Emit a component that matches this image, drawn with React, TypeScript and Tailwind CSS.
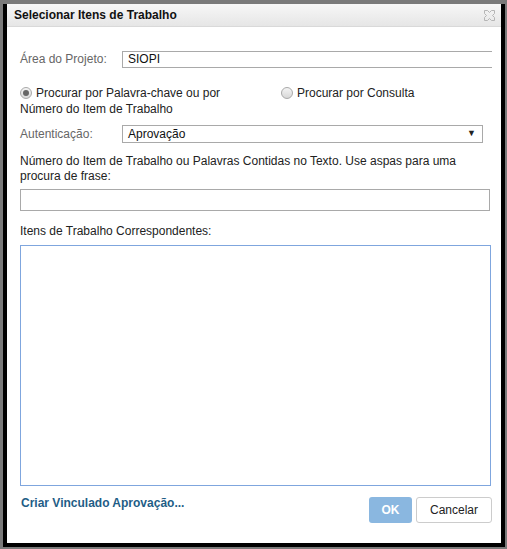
import React from 'react';

const font = { fontFamily: '"Liberation Sans", Arial, sans-serif' };

const Radio: React.FC<{ checked?: boolean }> = ({ checked }) => (
  <span className="inline-flex h-[12px] w-[12px] shrink-0 items-center justify-center rounded-full border border-[#a9a9a9] bg-gradient-to-b from-[#f4f4f4] to-[#d8d8d8]">
    {checked && <span className="h-[6px] w-[6px] rounded-full bg-[#666]" />}
  </span>
);

export default function App() {
  return (
    <div className="h-[549px] w-[507px] bg-[#7a7a7a] pt-[4px] pl-[3px] pr-[2px] pb-[2px] text-[12px] text-[#222]" style={font}>
      <div className="flex h-full flex-col border-x-[4px] border-b-[4px] border-black bg-white">
        <div className="flex h-[23px] items-center justify-between border-b border-[#d9d9d9] bg-gradient-to-b from-[#f7f7f7] to-[#e6e6e6] pl-[7px] pr-[5px]">
          <span className="text-[12px] font-bold text-[#111]">Selecionar Itens de Trabalho</span>
          <svg width="13" height="13" viewBox="0 0 13 13" fill="none" stroke="#b5b5b5" strokeWidth="1">
            <path d="M1.5 1.5h3l2 2 2-2h3v3l-2 2 2 2v3h-3l-2-2-2 2h-3v-3l2-2-2-2z" />
          </svg>
        </div>

        <div className="flex flex-1 flex-col pl-[13px] pr-[9px] pt-[23px]">
          <div className="flex items-center">
            <label className="w-[102px] text-[#666]">Área do Projeto:</label>
            <div className="h-[17px] flex-1 border-y border-l border-[#a9a9a9] pl-[5px] leading-[15px] text-[#111]">SIOPI</div>
          </div>

          <div className="mt-[17px] flex">
            <div className="w-[261px] leading-[16px]">
              <div className="flex items-center gap-[4px]">
                <Radio checked />
                <span>Procurar por Palavra-chave ou por</span>
              </div>
              <div>Número do Item de Trabalho</div>
            </div>
            <div className="flex h-[16px] items-center gap-[4px]">
              <Radio />
              <span>Procurar por Consulta</span>
            </div>
          </div>

          <div className="mt-[8px] flex items-center">
            <label className="w-[102px] text-[#666]">Autenticação:</label>
            <div className="mr-[9px] flex h-[18px] flex-1 items-center justify-between border border-[#a9a9a9] pl-[5px] pr-[6px] text-[#111]">
              <span>Aprovação</span>
              <span className="text-[9px] text-[#222]">▼</span>
            </div>
          </div>

          <p className="mt-[11px] leading-[15px]">
            Número do Item de Trabalho ou Palavras Contidas no Texto. Use aspas para uma procura de frase:
          </p>
          <div className="mt-[5px] mr-[2px] h-[22px] border border-[#a9a9a9]" />

          <p className="mt-[11px]">Itens de Trabalho Correspondentes:</p>
          <div className="mt-[5px] mr-[1px] h-[241px] border border-[#7fa6de]" />

          <div className="mt-[11px] mr-[0px] flex items-start justify-between">
            <a className="ml-[1px] font-bold leading-[13px] text-[#1f5d86]">Criar Vinculado Aprovação...</a>
            <div className="flex gap-[4px]">
              <button className="h-[26px] w-[43px] rounded-[3px] bg-[#8ab7e0] font-bold text-white">OK</button>
              <button className="h-[26px] w-[76px] rounded-[3px] border border-[#ccc] bg-white text-[#222]">Cancelar</button>
            </div>
          </div>
        </div>
      </div>
    </div>
  );
}
